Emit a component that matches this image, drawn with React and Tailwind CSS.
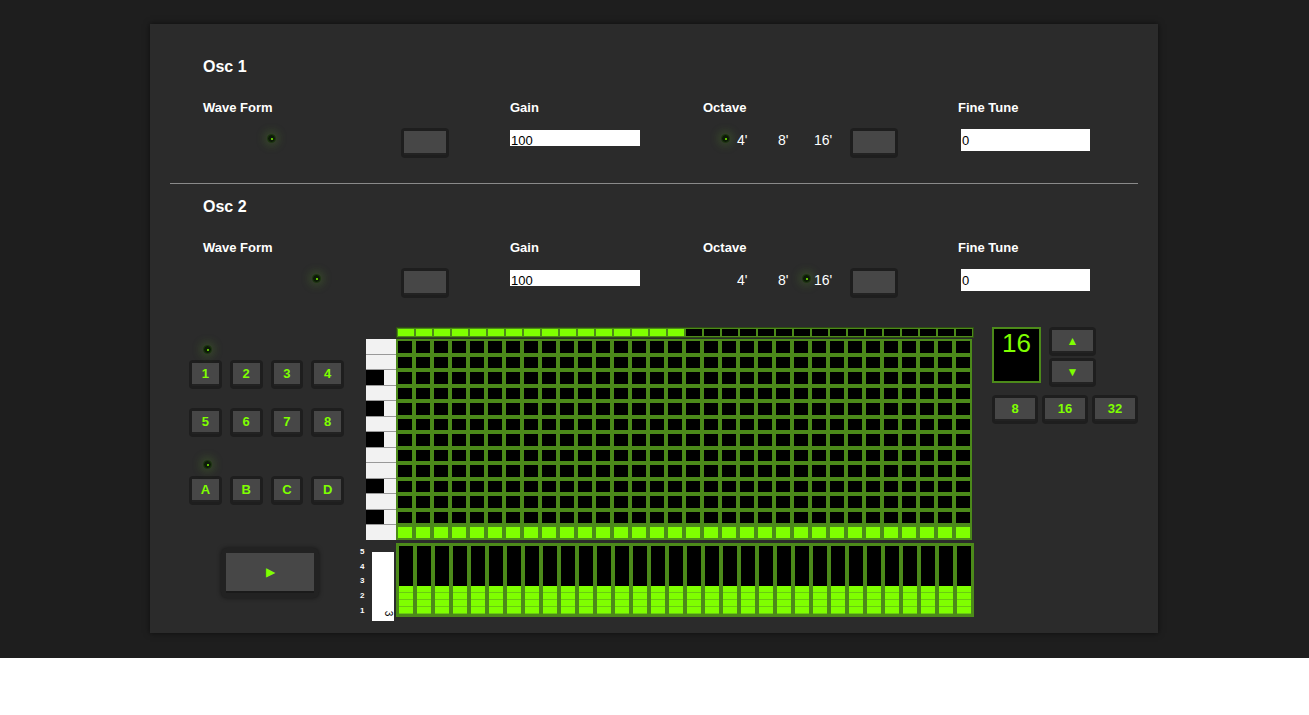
const F = { fontFamily: '"Liberation Sans", Arial, sans-serif' };

function Led({ className = '' }) {
  return (
    <div className={`w-[9px] h-[9px] rounded-full bg-[#0d1a08] border border-[#1f3a12] shadow-[0_0_8px_3px_rgba(90,160,40,0.25)] flex items-center justify-center ${className}`}>
      <div className="w-[2px] h-[2px] rounded-full bg-[#7fff00]" />
    </div>
  );
}

function Btn({ children, className = '' }) {
  return (
    <div className={`bg-[#1e1e1e] p-[3px] rounded-sm ${className}`}>
      <div className="w-full h-full bg-[#474747] border-b-2 border-[#222] flex items-center justify-center text-[#7fff00] text-[13px] font-bold">
        {children}
      </div>
    </div>
  );
}

function Osc({ title, waveLed, octLed }) {
  return (
    <div className="pl-[53px] relative">
      <div className="text-white font-bold text-[16px] h-[20px]">{title}</div>
      <div className="flex mt-[23px] text-white text-[13px] font-bold h-[16px]">
        <div className="w-[307px]">Wave Form</div>
        <div className="w-[193px]">Gain</div>
        <div className="w-[255px]">Octave</div>
        <div>Fine Tune</div>
      </div>
      <div className="flex items-center mt-[14px] h-[30px]">
        <div className="w-[198px] relative h-full">
          <Led className={`absolute top-[6px] ${waveLed}`} />
        </div>
        <Btn className="w-[48px] h-[30px]" />
        <div className="w-[61px]" />
        <div className="w-[130px] h-[16px] bg-white text-black text-[13px] leading-[22px] overflow-hidden pl-[1px] -mt-[10px]">100</div>
        <div className="w-[64px]" />
        <div className="flex items-center text-white text-[14px] w-[136px] relative h-full">
          <Led className={`absolute top-[6px] ${octLed}`} />
          <span className="absolute left-[33px] top-[2px]">4'</span>
          <span className="absolute left-[74px] top-[2px]">8'</span>
          <span className="absolute left-[110px] top-[2px]">16'</span>
        </div>
        <Btn className="w-[48px] h-[30px] ml-[10px]" />
        <div className="w-[63px]" />
        <div className="w-[129px] h-[22px] bg-white text-black text-[13px] leading-[24px] pl-[1px] -mt-[6px]">0</div>
      </div>
    </div>
  );
}

const cols = Array.from({ length: 32 }, (_, i) => i);
const rows = Array.from({ length: 12 }, (_, i) => i);
const blackRows = [2, 4, 6, 9, 11];

export default function App() {
  return (
    <div style={F} className="bg-white min-h-[715px]">
      <div className="bg-[#1e1e1e] h-[658px] pt-[24px]">
        <div className="ml-[150px] w-[1008px] h-[609px] bg-[#2b2b2b] shadow-[0_0_6px_rgba(0,0,0,0.6)] pt-[31px]">
          <Osc title="Osc 1" waveLed="left-[64px]" octLed="left-[17px]" />
          <div className="mx-[20px] mt-[25px] mb-[11px] h-px bg-[#8a8a8a]" />
          <Osc title="Osc 2" waveLed="left-[109px]" octLed="left-[98px]" />

          <div className="flex mt-[29px]">
            {/* pads */}
            <div className="w-[216px] pl-[39px] pt-[18px] relative">
              <Led className="absolute left-[53px] top-[18px]" />
              <div className="grid grid-cols-4 gap-x-[8px] w-[155px] mt-[15px]">
                {['1', '2', '3', '4'].map(k => <Btn key={k} className="h-[29px]">{k}</Btn>)}
              </div>
              <div className="grid grid-cols-4 gap-x-[8px] w-[155px] mt-[19px]">
                {['5', '6', '7', '8'].map(k => <Btn key={k} className="h-[29px]">{k}</Btn>)}
              </div>
              <Led className="absolute left-[53px] top-[133px]" />
              <div className="grid grid-cols-4 gap-x-[8px] w-[155px] mt-[39px]">
                {['A', 'B', 'C', 'D'].map(k => <Btn key={k} className="h-[29px]">{k}</Btn>)}
              </div>
              <div className="ml-[32px] mt-[43px] w-[98px] h-[50px] bg-[#222] rounded-md p-[5px] shadow-[0_0_4px_rgba(0,0,0,0.5)]">
                <div className="w-full h-full bg-[#474747] border-b-2 border-[#1a1a1a] flex items-center justify-center text-[#7fff00] text-[12px]">▶</div>
              </div>
            </div>

            {/* sequencer */}
            <div className="flex flex-col">
              <div className="flex">
                <div className="w-[30px]" />
                <div className="grid grid-cols-[repeat(32,18px)] bg-[#2d4d12] p-px h-[11px]">
                  {cols.map(c => (
                    <div key={c} className={`border border-[#4d8a1a] ${c < 16 ? 'bg-[#7fff00]' : 'bg-black'}`} />
                  ))}
                </div>
              </div>
              <div className="flex mt-px">
                <div className="w-[30px] flex flex-col">
                  {rows.map(r => (
                    <div key={r} className="h-[15.5px] bg-[#f2f2f2] border-b border-[#999] relative">
                      {blackRows.includes(r) && <div className="absolute left-0 top-0 w-[18px] h-full bg-black" />}
                    </div>
                  ))}
                  <div className="h-[15px] bg-[#f2f2f2]" />
                </div>
                <div className="flex flex-col">
                  <div className="grid grid-cols-[repeat(32,18px)] bg-[#4c8a1a]">
                    {rows.map(r => cols.map(c => (
                      <div key={`${r}-${c}`} className="h-[15.5px] border-2 border-[#4c8a1a] bg-black" />
                    )))}
                  </div>
                  <div className="grid grid-cols-[repeat(32,18px)] bg-[#4c8a1a]">
                    {cols.map(c => <div key={c} className="h-[15px] border-2 border-[#4c8a1a] bg-[#7fff00]" />)}
                  </div>
                </div>
              </div>
              <div className="flex mt-[3px]">
                <div className="w-[30px] flex relative">
                  <div className="text-white text-[8px] leading-[14.7px] w-[12px] -ml-[6px] pt-[2px] font-bold">
                    {[5, 4, 3, 2, 1].map(n => <div key={n}>{n}</div>)}
                  </div>
                  <div className="w-[22px] h-[69px] mt-[9px] bg-white relative">
                    <span className="absolute bottom-0 right-[2px] text-[10px] text-black rotate-90">3</span>
                  </div>
                </div>
                <div className="grid grid-cols-[repeat(32,18px)] bg-[#4c8a1a] h-[74px] p-px">
                  {cols.map(c => (
                    <div key={c} className="border-2 border-[#4c8a1a] bg-black flex flex-col justify-end">
                      {[0, 1, 2, 3].map(i => <div key={i} className="h-[7px] bg-[#7fff00] border-b border-[#6acc10]" />)}
                    </div>
                  ))}
                </div>
              </div>
            </div>

            {/* right controls */}
            <div className="ml-[18px]">
              <div className="flex">
                <div className="w-[49px] h-[56px] bg-black border-2 border-[#4c8a1a] text-[#7fff00] text-[26px] leading-[28px] pl-[8px]">16</div>
                <div className="ml-[8px] flex flex-col gap-[2px]">
                  <Btn className="w-[47px] h-[29px]"><span className="text-[12px]">▲</span></Btn>
                  <Btn className="w-[47px] h-[29px]"><span className="text-[12px]">▼</span></Btn>
                </div>
              </div>
              <div className="flex gap-[4px] mt-[8px]">
                {['8', '16', '32'].map(k => <Btn key={k} className="w-[46px] h-[29px]">{k}</Btn>)}
              </div>
            </div>
          </div>
        </div>
      </div>
    </div>
  );
}
